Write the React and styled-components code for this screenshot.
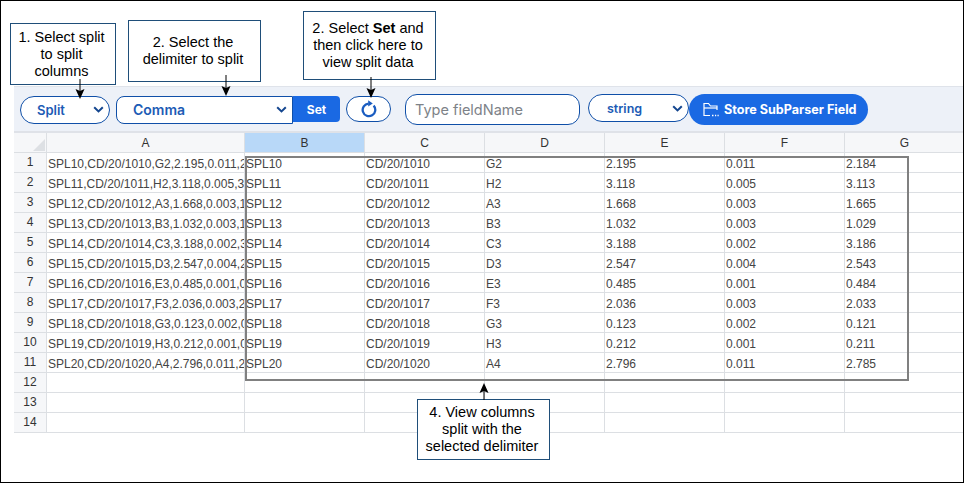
import React from 'react'
import styled, { createGlobalStyle } from 'styled-components'

const GlobalStyle = createGlobalStyle`
  html, body {
    margin: 0;
    padding: 0;
    background: #fff;
  }
`

const Frame = styled.div`
  position: relative;
  box-sizing: border-box;
  width: 964px;
  height: 483px;
  border: 1px solid #000;
  padding: 85px 0 0 13px;
  overflow: hidden;
  font-family: "Liberation Sans", Arial, sans-serif;
`

const Toolbar = styled.div`
  display: flex;
  align-items: flex-start;
  box-sizing: border-box;
  height: 47px;
  padding: 7px 0 0 6px;
  background: #edf1f8;
  border-top: 1px solid #dfe3ea;
  border-bottom: 2px solid #dfe2e8;
  font-family: Inter, "Noto Sans", sans-serif;
`

const SelectBox = styled.div`
  display: flex;
  align-items: center;
  justify-content: space-between;
  box-sizing: border-box;
  width: ${props => props.$width}px;
  height: ${props => props.$height}px;
  margin-top: ${props => props.$top || 0}px;
  margin-left: ${props => props.$left || 0}px;
  padding: 0 5px ${props => props.$lift || 0}px ${props => props.$pad}px;
  background: #fff;
  border: 1px solid #0f4fa8;
  border-radius: ${props => props.$radius};
  color: #1c5bb5;
  font-size: ${props => props.$size}px;
  font-weight: 600;
`

const SetButton = styled.div`
  display: flex;
  align-items: center;
  justify-content: center;
  width: 47px;
  height: 26px;
  margin-top: 2px;
  background: #1a69e3;
  border-radius: 0 4px 4px 0;
  color: #fff;
  font-size: 12px;
  font-weight: 700;
`

const RefreshButton = styled.div`
  display: flex;
  align-items: center;
  justify-content: center;
  box-sizing: border-box;
  width: 45px;
  height: 26px;
  margin: 2px 0 0 6px;
  background: #fff;
  border: 1px solid #0f4fa8;
  border-radius: 13px;
`

const FieldInput = styled.div`
  display: flex;
  align-items: center;
  box-sizing: border-box;
  width: 175px;
  height: 31px;
  margin-left: 14px;
  padding: 0 0 1px 9px;
  background: #fff;
  border: 1px solid #0f4fa8;
  border-radius: 12px;
  color: #7d8288;
  font-size: 14.5px;
`

const StoreButton = styled.div`
  display: flex;
  align-items: center;
  gap: 5px;
  box-sizing: border-box;
  width: 179px;
  height: 31px;
  padding: 0 0 1px 14px;
  background: #1a69e3;
  border-radius: 16px;
  color: #fff;
  font-size: 12.6px;
  font-weight: 700;
  white-space: nowrap;
`

const Sheet = styled.div`
  display: grid;
  grid-template-columns: 33px 198px repeat(6, 120px);
  grid-auto-rows: 20px;
  font-size: 12px;
  color: #444;
`

const Cell = styled.div`
  box-sizing: border-box;
  padding: 3px 0 0 1px;
  line-height: 16px;
  background: #fff;
  border-right: 1px solid #dcdfe3;
  border-bottom: 1px solid #dcdfe3;
  white-space: nowrap;
  overflow: hidden;
`

const HeaderCell = styled(Cell)`
  position: relative;
  padding: 2px 0 0;
  text-align: center;
  color: #333;
  background: ${props => (props.$active ? '#b8d8f8' : '#f6f7f9')};
`

const RowNumber = styled(Cell)`
  padding: 1px 0 0;
  text-align: center;
  color: #333;
  background: #f6f7f9;
`

const Corner = styled.span`
  position: absolute;
  right: 1px;
  bottom: 1px;
  width: 0;
  height: 0;
  border-left: 12px solid transparent;
  border-bottom: 12px solid #dde0e4;
`

const SplitFrame = styled.div`
  position: absolute;
  left: 244px;
  top: 155px;
  width: 664px;
  height: 225px;
  box-sizing: border-box;
  border: 2px solid #808080;
  pointer-events: none;
`

const Callout = styled.div`
  position: absolute;
  left: ${props => props.$x}px;
  top: ${props => props.$y}px;
  box-sizing: border-box;
  display: flex;
  align-items: center;
  justify-content: center;
  width: ${props => props.$w}px;
  height: ${props => props.$h}px;
  padding-right: 3px;
  background: #fff;
  border: 1px solid #1f4e79;
  color: #000;
  font-size: 14.5px;
  line-height: 17px;
  text-align: center;
`

const ArrowWrap = styled.svg`
  position: absolute;
  left: ${props => props.$x - 6}px;
  top: ${props => props.$y}px;
`

const Chevron = () => (
  <svg width="11" height="7" viewBox="0 0 11 7" fill="none">
    <path d="M1.2 1.2 5.5 5.4 9.8 1.2" stroke="#14468f" strokeWidth="2" />
  </svg>
)

const RefreshIcon = () => (
  <svg width="18" height="18" viewBox="0 0 18 18" fill="none">
    <path d="M8.5 3.6A6.3 6.3 0 1 0 13.6 5.6" stroke="#1a5cc0" strokeWidth="2.3" />
    <path d="M8.2 0.2 12.8 3.4 8.2 6.6Z" fill="#1a5cc0" />
  </svg>
)

const FolderIcon = () => (
  <svg width="16" height="15" viewBox="0 0 16 15" fill="none" stroke="#fff" strokeWidth="1.2">
    <path d="M7 13.5H1V1.5H5.5L7.5 4H14V8" />
    <path d="M1 6H14" />
    <path d="M9 13.5h1.5M12 13.5h1.2M14.5 13.5h1.2" strokeWidth="1.6" />
  </svg>
)

const Arrow = ({ x, y, length, up }) => (
  <ArrowWrap $x={x} $y={y} width="12" height={length} viewBox={`0 0 12 ${length}`} fill="none">
    {up ? (
      <>
        <path d={`M6 5V${length}`} stroke="#000" strokeWidth="1" />
        <path d="M6 0 10.5 10 6 8 1.5 10Z" fill="#000" />
      </>
    ) : (
      <>
        <path d={`M6 0V${length - 5}`} stroke="#000" strokeWidth="1" />
        <path d={`M6 ${length} 10.5 ${length - 10} 6 ${length - 8} 1.5 ${length - 10}Z`} fill="#000" />
      </>
    )}
  </ArrowWrap>
)

const columns = ['A', 'B', 'C', 'D', 'E', 'F', 'G']

const rows = [
  ['SPL10', 'CD/20/1010', 'G2', '2.195', '0.011', '2.184'],
  ['SPL11', 'CD/20/1011', 'H2', '3.118', '0.005', '3.113'],
  ['SPL12', 'CD/20/1012', 'A3', '1.668', '0.003', '1.665'],
  ['SPL13', 'CD/20/1013', 'B3', '1.032', '0.003', '1.029'],
  ['SPL14', 'CD/20/1014', 'C3', '3.188', '0.002', '3.186'],
  ['SPL15', 'CD/20/1015', 'D3', '2.547', '0.004', '2.543'],
  ['SPL16', 'CD/20/1016', 'E3', '0.485', '0.001', '0.484'],
  ['SPL17', 'CD/20/1017', 'F3', '2.036', '0.003', '2.033'],
  ['SPL18', 'CD/20/1018', 'G3', '0.123', '0.002', '0.121'],
  ['SPL19', 'CD/20/1019', 'H3', '0.212', '0.001', '0.211'],
  ['SPL20', 'CD/20/1020', 'A4', '2.796', '0.011', '2.785'],
]

const App = () => (
  <Frame>
    <GlobalStyle />
    <Toolbar>
      <SelectBox $width={90} $height={28} $top={2} $pad={16} $size={13} $lift={1} $radius="14px">
        Split <Chevron />
      </SelectBox>
      <SelectBox $width={177} $height={28} $top={2} $left={6} $pad={16} $size={14} $lift={2} $radius="8px 0 0 8px">
        Comma <Chevron />
      </SelectBox>
      <SetButton>Set</SetButton>
      <RefreshButton>
        <RefreshIcon />
      </RefreshButton>
      <FieldInput>Type fieldName</FieldInput>
      <SelectBox $width={101} $height={28} $left={8} $pad={18} $size={12.5} $radius="14px">
        string <Chevron />
      </SelectBox>
      <StoreButton>
        <FolderIcon />
        Store SubParser Field
      </StoreButton>
    </Toolbar>
    <Sheet>
      <HeaderCell>
        <Corner />
      </HeaderCell>
      {columns.map(col => (
        <HeaderCell key={col} $active={col === 'B'}>
          {col}
        </HeaderCell>
      ))}
      {rows.map((row, i) => (
        <React.Fragment key={row[0]}>
          <RowNumber>{i + 1}</RowNumber>
          <Cell>{row.join(',')}</Cell>
          {row.map((value, j) => (
            <Cell key={j}>{value}</Cell>
          ))}
        </React.Fragment>
      ))}
      {[12, 13, 14].map(n => (
        <React.Fragment key={n}>
          <RowNumber>{n}</RowNumber>
          {columns.map(col => (
            <Cell key={col} />
          ))}
        </React.Fragment>
      ))}
    </Sheet>

    <SplitFrame />

    <Callout $x={9} $y={22} $w={106} $h={62}>
      1. Select split
      <br />
      to split
      <br />
      columns
    </Callout>
    <Callout $x={127} $y={19} $w={133} $h={62}>
      2. Select the
      <br />
      delimiter to split
    </Callout>
    <Callout $x={302} $y={10} $w={133} $h={69}>
      <span>
        2. Select <b>Set</b> and
        <br />
        then click here to
        <br />
        view split data
      </span>
    </Callout>
    <Callout $x={416} $y={398} $w={133} $h={61}>
      4. View columns
      <br />
      split with the
      <br />
      selected delimiter
    </Callout>

    <Arrow x={79} y={78} length={20} />
    <Arrow x={225} y={74} length={21} />
    <Arrow x={370} y={76} length={21} />
    <Arrow x={483} y={382} length={17} up />
  </Frame>
)

export default App
